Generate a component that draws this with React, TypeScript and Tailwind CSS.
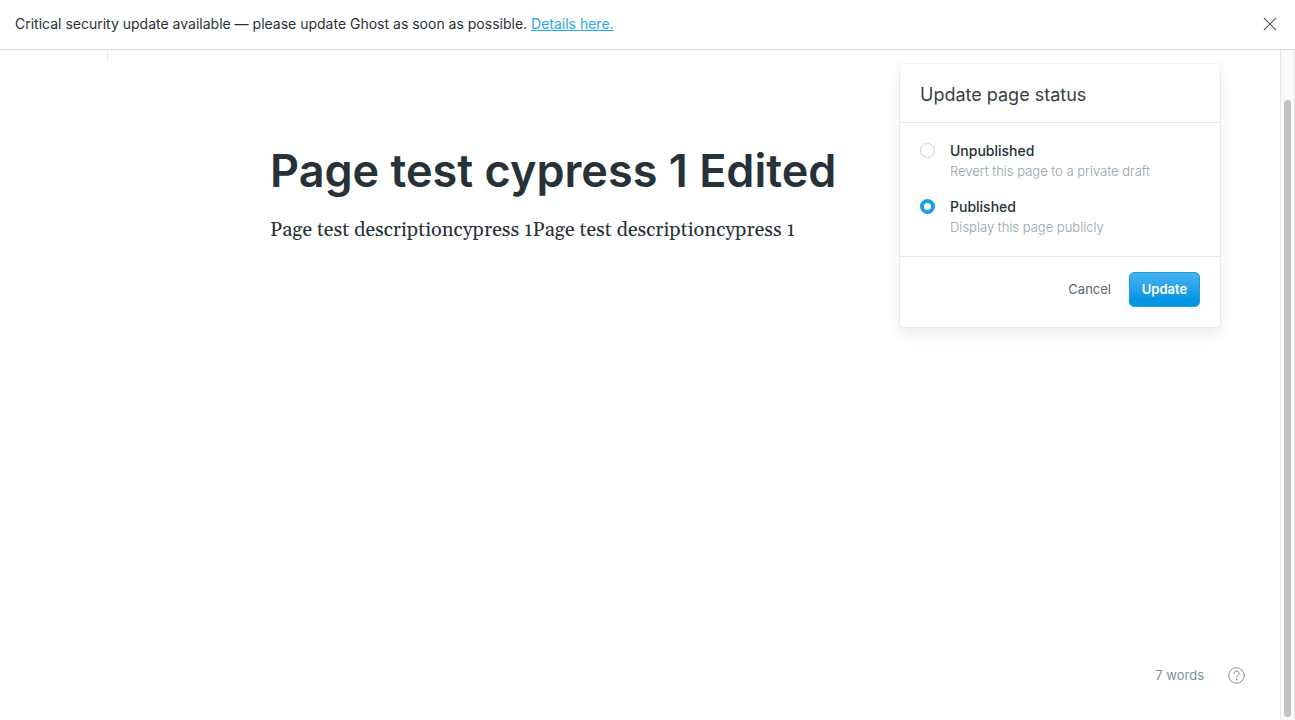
import { useState } from "react";

type Status = "unpublished" | "published";

const options: { value: Status; label: string; hint: string }[] = [
  { value: "unpublished", label: "Unpublished", hint: "Revert this page to a private draft" },
  { value: "published", label: "Published", hint: "Display this page publicly" },
];

function Alert() {
  return (
    <header className="relative z-10 flex h-[50px] shrink-0 items-center justify-between border-b border-[#d9dcde] bg-white pr-[18px] pb-px pl-[15px] text-[14px] text-[#263238]">
      <p className="pb-px">
        Critical security update available — please update Ghost as soon as possible.{" "}
        <a href="#details" className="text-[#26a8ed] underline">
          Details here.
        </a>
      </p>
      <button type="button" aria-label="Close" className="text-[#48555b]">
        <svg width="14" height="14" viewBox="0 0 14 14" fill="none" stroke="currentColor" strokeWidth="1.1" strokeLinecap="round">
          <path d="M1.2 1.2 12.8 12.8M12.8 1.2 1.2 12.8" />
        </svg>
      </button>
    </header>
  );
}

function StatusMenu() {
  const [status, setStatus] = useState<Status>("published");
  return (
    <form
      onSubmit={(event) => event.preventDefault()}
      className="absolute top-[14px] right-[60px] w-[320px] rounded-[4px] bg-white shadow-[0_0_0_1px_rgba(99,114,130,0.09),0_8px_16px_rgba(27,39,51,0.08)]"
    >
      <h2 className="border-b border-[#dfebf0] px-5 pt-[17px] pb-[14px] text-[18px] leading-[27px] text-[#343f44]">
        Update page status
      </h2>
      <div className="flex flex-col gap-4 border-b border-[#dfebf0] px-5 pt-[18px] pb-[19px]">
        {options.map(({ value, label, hint }) => (
          <label key={value} className="flex gap-[15px]">
            <input
              type="radio"
              name="status"
              checked={status === value}
              onChange={() => setStatus(value)}
              className="mt-[2px] size-[15px] shrink-0 appearance-none rounded-full border border-[#b9d5e4] bg-white checked:border-4 checked:border-[#1a9fe6]"
            />
            <span>
              <span className="block text-[14px] leading-[20px] font-medium text-[#263238]">{label}</span>
              <span className="block text-[13px] leading-[20px] font-light text-[#8fa3ad]">{hint}</span>
            </span>
          </label>
        ))}
      </div>
      <div className="flex justify-end gap-[18px] px-5 pt-[15px] pb-5 text-[13px]">
        <button type="button" className="text-[#546a74]">
          Cancel
        </button>
        <button
          type="submit"
          className="h-[35px] w-[71px] rounded-[5px] border border-[#1c9de0] bg-linear-to-b from-[#45b3ef] to-[#0096e3] to-80% font-semibold text-white"
        >
          Update
        </button>
      </div>
    </form>
  );
}

export default function App() {
  return (
    <div className="flex min-h-screen flex-col bg-white font-['Inter',sans-serif]">
      <Alert />
      <div className="flex flex-1">
        <main className="relative flex min-w-0 flex-1 flex-col">
          <div className="ml-[107px] h-[10px] border-l border-[#dfe8ee]" />
          <article className="mx-auto w-full max-w-[740px] flex-1 pt-20 text-[#263238]">
            <h1 className="text-[45px] leading-[62px] font-semibold">Page test cypress 1 Edited</h1>
            <p className="mt-[11px] font-['Gelasio','Georgia','Liberation_Serif',serif] text-[20px] leading-[34px]">
              Page test descriptioncypress 1Page test descriptioncypress 1
            </p>
          </article>
          <StatusMenu />
          <footer className="flex items-center justify-end gap-6 pr-[35px] pb-9 text-[13px] leading-[17px] text-[#7c929e]">
            <span>7 words</span>
            <a href="#help" aria-label="Help">
              <svg width="17" height="17" viewBox="0 0 17 17" fill="none" stroke="currentColor" strokeWidth="1" strokeLinecap="round" strokeLinejoin="round">
                <circle cx="8.5" cy="8.5" r="7.8" />
                <path d="M5.9 6.6a2.6 2.6 0 1 1 3.8 2.3c-.8.4-1.2.8-1.2 1.7" />
                <circle cx="8.5" cy="12.7" r=".35" fill="currentColor" />
              </svg>
            </a>
          </footer>
        </main>
        <div className="flex w-[15px] border-x border-[#e6e6e6] bg-[#fafafa] px-[3px] pt-[50px] pb-[3px]">
          <div className="w-full rounded-full bg-[#c1c1c1]" />
        </div>
      </div>
    </div>
  );
}
